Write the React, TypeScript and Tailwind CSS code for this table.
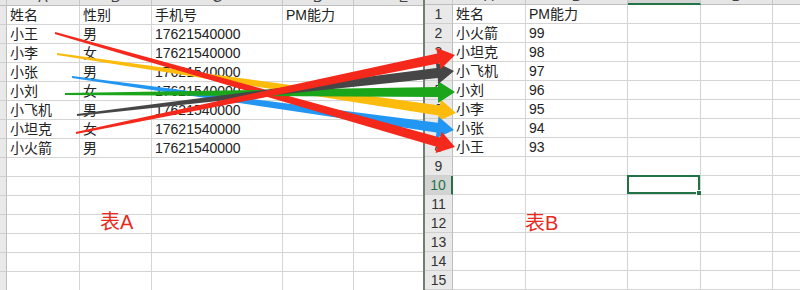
import React from "react";

const LEFT_COLS = ["w-[7px]", "w-[73px]", "w-[72px]", "w-[131px]", "w-[71px]", "w-[100px]"];
const RIGHT_COLS = ["w-[28px]", "w-[73px]", "w-[102px]", "w-[73px]", "w-[72px]", "w-[100px]"];

const leftRows: string[][] = [
  ["姓名", "性别", "手机号", "PM能力", ""],
  ["小王", "男", "17621540000", "", ""],
  ["小李", "女", "17621540000", "", ""],
  ["小张", "男", "17621540000", "", ""],
  ["小刘", "女", "17621540000", "", ""],
  ["小飞机", "男", "17621540000", "", ""],
  ["小坦克", "女", "17621540000", "", ""],
  ["小火箭", "男", "17621540000", "", ""],
];

const rightRows: string[][] = [
  ["姓名", "PM能力", "", "", ""],
  ["小火箭", "99", "", "", ""],
  ["小坦克", "98", "", "", ""],
  ["小飞机", "97", "", "", ""],
  ["小刘", "96", "", "", ""],
  ["小李", "95", "", "", ""],
  ["小张", "94", "", "", ""],
  ["小王", "93", "", "", ""],
];

const LETTERS = ["A", "B", "C", "D", "E"];

function Sheet({
  cols,
  rows,
  headerH,
  showNumbers,
  selected,
}: {
  cols: string[];
  rows: string[][];
  headerH: string;
  showNumbers?: boolean;
  selected?: { row: number; col: number };
}) {
  const allRows = Array.from({ length: 15 }, (_, i) => rows[i] ?? ["", "", "", "", ""]);
  return (
    <div className="flex flex-col">
      {/* column header, mostly scrolled out of view */}
      <div className={`flex shrink-0 overflow-hidden ${headerH}`}>
        {cols.map((w, c) => {
          const sel = selected && selected.col === c;
          return (
            <div
              key={c}
              className={`${w} shrink-0 flex items-end justify-center overflow-hidden border-r border-[#c8c8c8] ${
                sel ? "bg-[#d3d3d3] border-b-2 border-b-[#217346]" : "bg-[#e6e6e6] border-b border-b-[#bdbdbd]"
              }`}
            >
              {c > 0 && (
                <span className="text-[14px] leading-[14px] text-[#444] mb-[1px]">{LETTERS[c - 1]}</span>
              )}
            </div>
          );
        })}
      </div>
      {allRows.map((row, r) => {
        const n = r + 1;
        const selRow = selected && selected.row === n;
        return (
          <div key={r} className="flex h-[19px] shrink-0">
            <div
              className={`${cols[0]} shrink-0 flex items-center justify-center border-b border-[#cfcfcf] text-[14px] leading-[18px] ${
                selRow
                  ? "bg-[#d3d3d3] border-r-2 border-r-[#217346] text-[#217346]"
                  : "bg-[#e9e9e9] border-r border-r-[#bdbdbd] text-[#333]"
              }`}
            >
              {showNumbers ? n : ""}
            </div>
            {row.map((cell, c) => {
              const isSel = selected && selected.row === n && selected.col === c + 1;
              return (
                <div
                  key={c}
                  className={`${cols[c + 1]} relative shrink-0 border-r border-b border-[#d4d4d4] px-[3px] text-[14px] leading-[18px] text-[#222] whitespace-nowrap`}
                >
                  {cell}
                  {isSel && (
                    <div className="absolute -left-[1px] -top-[1px] -right-0 -bottom-0 border-2 border-[#217346]">
                      <div className="absolute -right-[4px] -bottom-[4px] w-[6px] h-[6px] bg-[#217346] border border-white" />
                    </div>
                  )}
                </div>
              );
            })}
          </div>
        );
      })}
    </div>
  );
}

function arrowPoints(x1: number, y1: number, x2: number, y2: number, w0: number, w1: number, hw: number, hl: number) {
  const dx = x2 - x1;
  const dy = y2 - y1;
  const len = Math.hypot(dx, dy);
  const ux = dx / len;
  const uy = dy / len;
  const nx = -uy;
  const ny = ux;
  const bx = x2 - ux * hl;
  const by = y2 - uy * hl;
  const pts = [
    [x1 + (nx * w0) / 2, y1 + (ny * w0) / 2],
    [bx + (nx * w1) / 2, by + (ny * w1) / 2],
    [bx + (nx * hw) / 2, by + (ny * hw) / 2],
    [x2, y2],
    [bx - (nx * hw) / 2, by - (ny * hw) / 2],
    [bx - (nx * w1) / 2, by - (ny * w1) / 2],
    [x1 - (nx * w0) / 2, y1 - (ny * w0) / 2],
  ];
  return pts.map((p) => p.map((v) => v.toFixed(1)).join(",")).join(" ");
}

const arrows = [
  { from: [57, 54], to: [456, 113], color: "#fdbb0b" },
  { from: [72, 77], to: [454, 130], color: "#2196f3" },
  { from: [55, 33], to: [455, 147], color: "#f5281c" },
  { from: [65, 94], to: [455, 92], color: "#1ba51b" },
  { from: [77, 115], to: [454, 71], color: "#464646" },
  { from: [76, 133], to: [455, 55], color: "#f5281c" },
];

export default function App() {
  return (
    <div className="relative w-[800px] h-[290px] overflow-hidden bg-white font-['Liberation_Sans','Noto_Sans_CJK_SC',sans-serif]">
      <div className="flex h-full">
        <div className="w-[423px] shrink-0 overflow-hidden">
          <Sheet cols={LEFT_COLS} rows={leftRows} headerH="h-[6px]" />
        </div>
        <div className="w-[2px] shrink-0 bg-[#6f7f74]" />
        <div className="flex-1 overflow-hidden">
          <Sheet cols={RIGHT_COLS} rows={rightRows} headerH="h-[5px]" showNumbers selected={{ row: 10, col: 3 }} />
        </div>
      </div>

      <span className="absolute left-[100px] top-[209px] text-[20px] leading-[26px] text-[#e8291d]">表A</span>
      <span className="absolute left-[525px] top-[210px] text-[20px] leading-[26px] text-[#e8291d]">表B</span>

      <svg className="absolute inset-0 pointer-events-none" width="800" height="290" viewBox="0 0 800 290">
        {arrows.map((a, i) => (
          <polygon
            key={i}
            points={arrowPoints(a.from[0], a.from[1], a.to[0], a.to[1], 2, 10, 22, 17)}
            fill={a.color}
          />
        ))}
      </svg>
    </div>
  );
}
